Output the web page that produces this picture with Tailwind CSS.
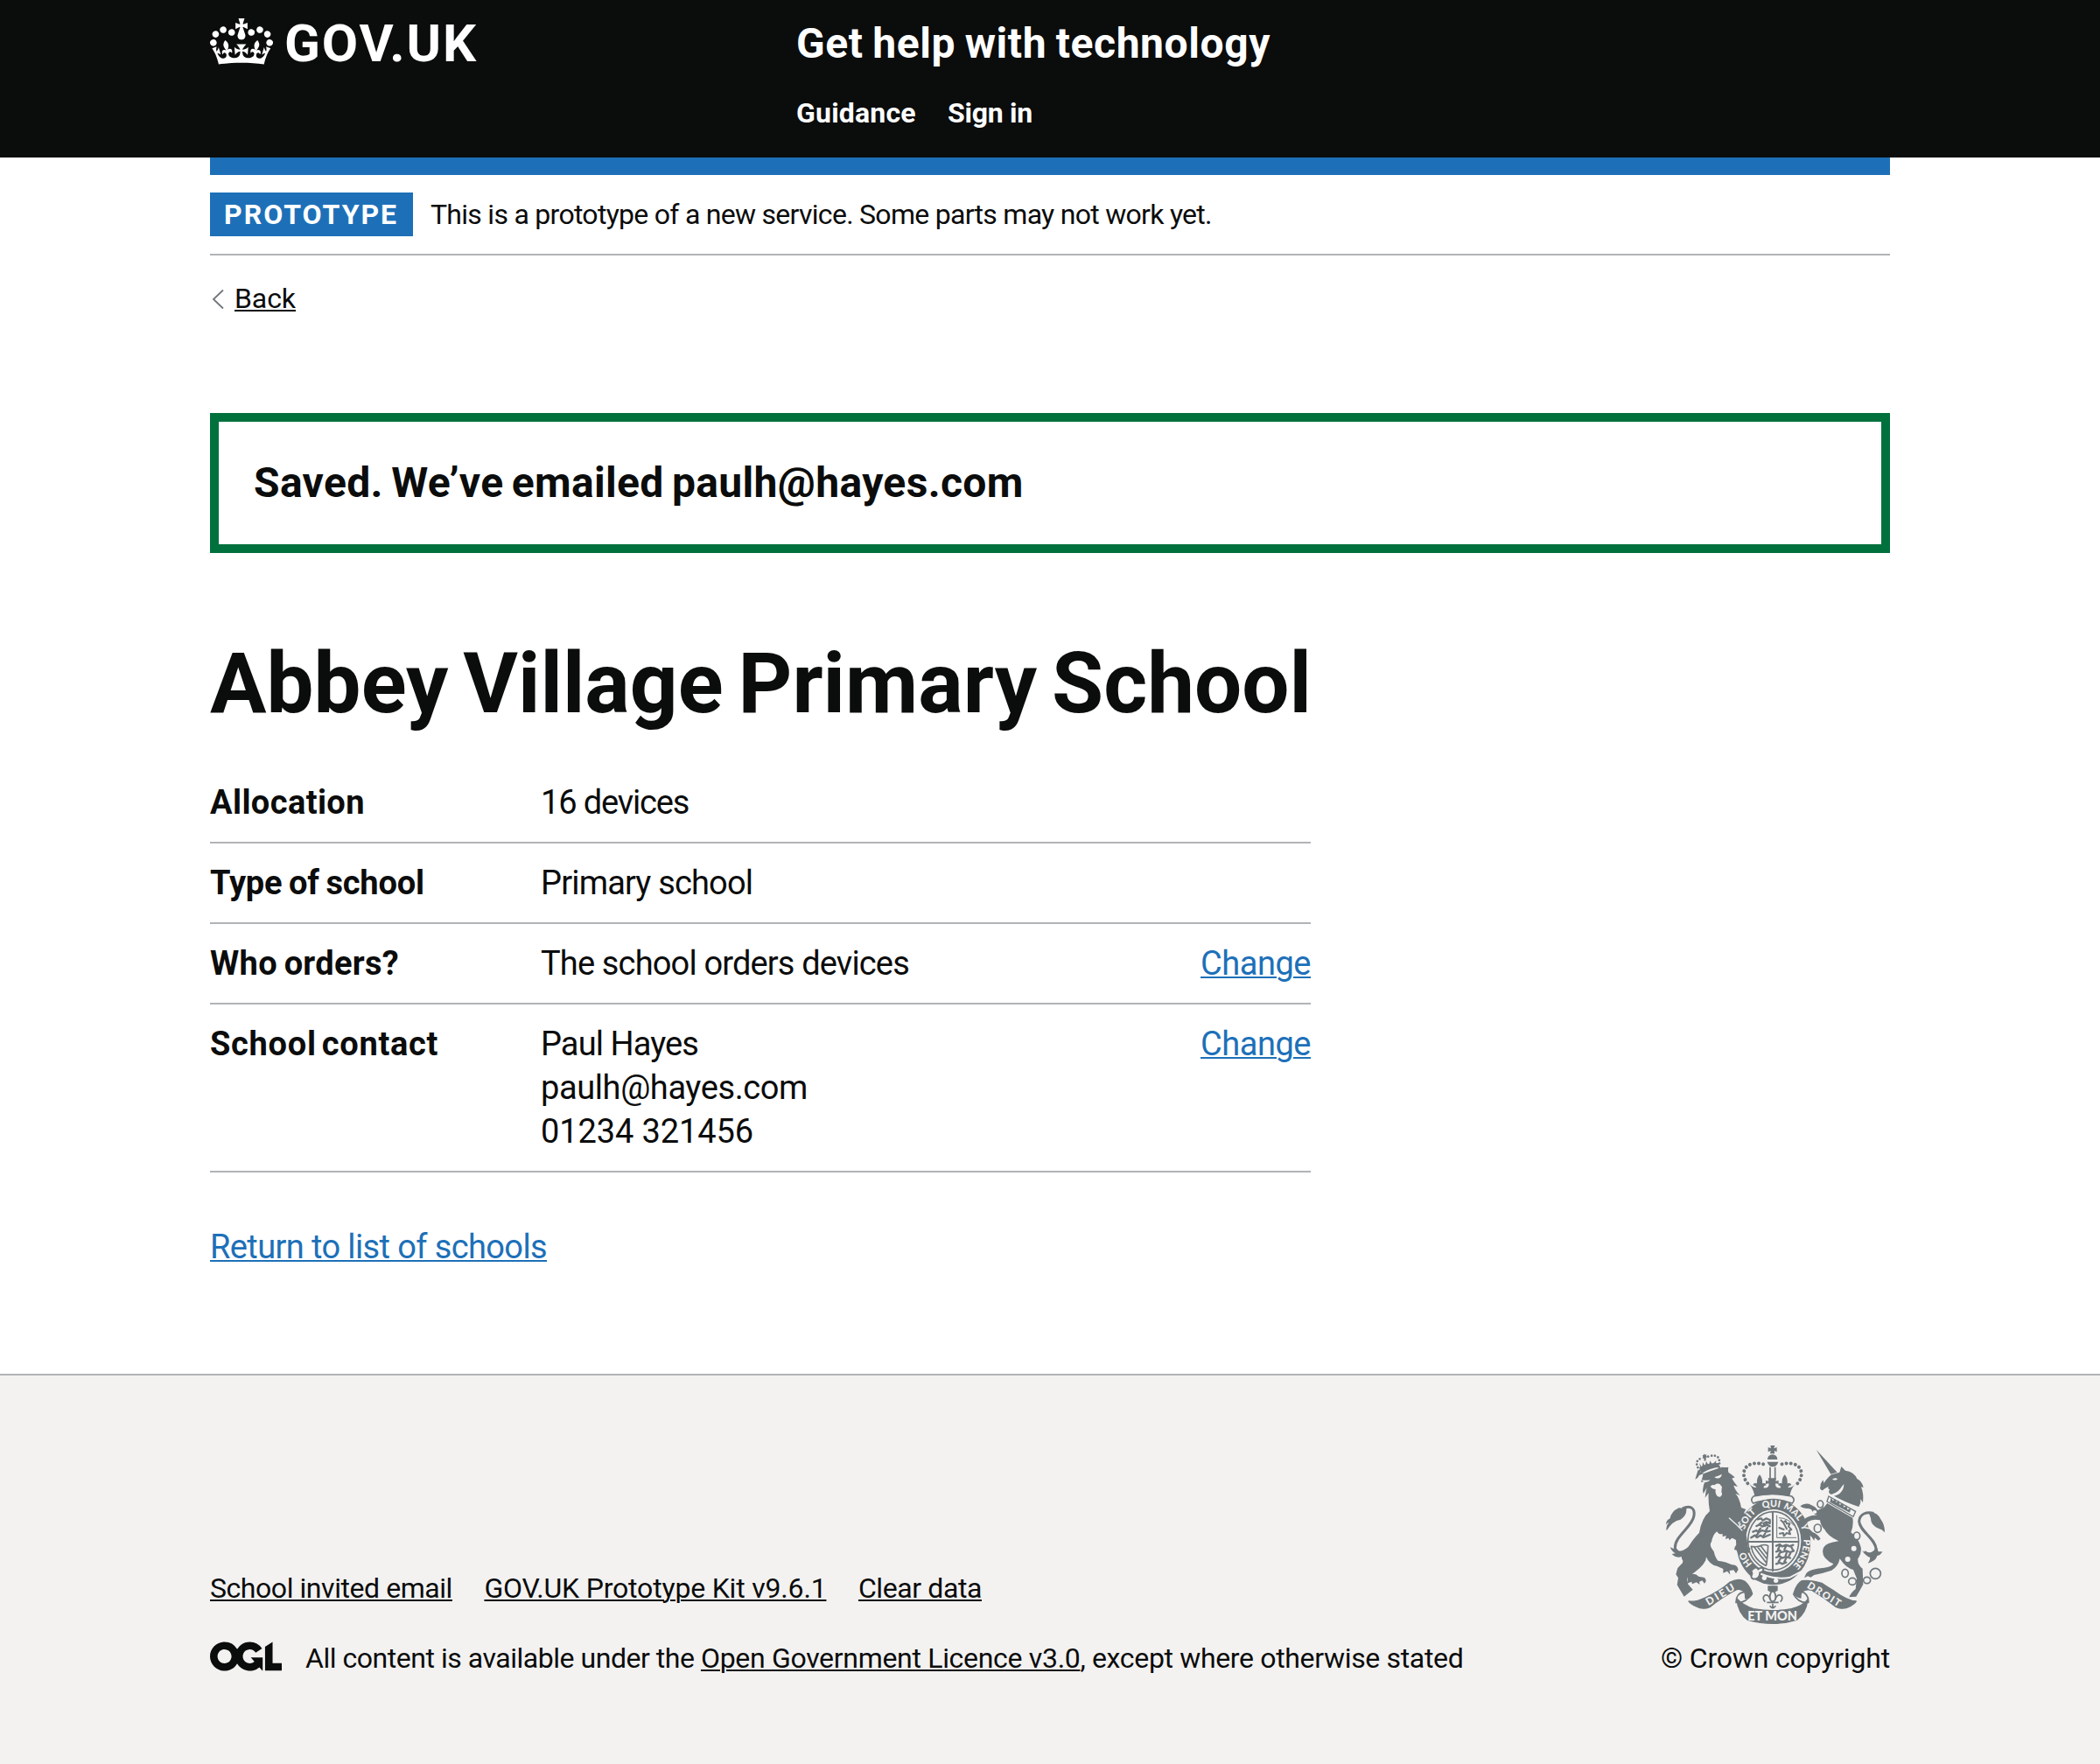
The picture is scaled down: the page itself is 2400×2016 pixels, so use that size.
<!DOCTYPE html>
<html lang="en">
<head>
<meta charset="utf-8">
<title>Abbey Village Primary School</title>
<script src="https://cdn.jsdelivr.net/npm/@tailwindcss/browser@4"></script>
</head>
<body class="flex min-h-screen flex-col bg-white font-['Roboto',sans-serif] text-[32px] leading-[40px] whitespace-nowrap text-[#0b0c0c]">

<header class="h-[180px] bg-[#0b0c0c] px-[240px] pt-5 font-bold text-white">
  <div class="flex">
    <a href="#" class="flex h-[60px] w-[670px] gap-[13px]">
      <svg class="mt-px h-[53px] w-[72px]" viewBox="0 0 132 97" fill="currentColor" aria-hidden="true"><path fill-rule="evenodd" d="M25 30.2c3.5 1.5 7.7-.2 9.1-3.7 1.5-3.6-.2-7.8-3.9-9.2-3.6-1.4-7.6.3-9.1 3.9-1.4 3.5.3 7.5 3.9 9zM9 39.5c3.6 1.5 7.8-.2 9.2-3.7 1.5-3.6-.2-7.8-3.9-9.1-3.6-1.5-7.6.2-9.1 3.8-1.4 3.5.3 7.5 3.8 9zM4.4 57.2c3.5 1.5 7.7-.2 9.1-3.8 1.5-3.6-.2-7.7-3.9-9.1-3.5-1.5-7.6.3-9.1 3.8-1.4 3.5.3 7.6 3.9 9.1zm38.3-21.4c3.5 1.5 7.7-.2 9.1-3.8 1.5-3.6-.2-7.7-3.9-9.1-3.6-1.5-7.6.3-9.1 3.8-1.3 3.6.4 7.7 3.9 9.1zm64.4-5.6c-3.6 1.5-7.8-.2-9.1-3.7-1.5-3.6.2-7.8 3.8-9.2 3.6-1.4 7.7.3 9.2 3.9 1.3 3.5-.4 7.5-3.9 9zm15.9 9.3c-3.6 1.5-7.7-.2-9.1-3.7-1.5-3.6.2-7.8 3.7-9.1 3.6-1.5 7.7.2 9.2 3.8 1.5 3.5-.3 7.5-3.8 9zm4.7 17.7c-3.6 1.5-7.8-.2-9.2-3.8-1.5-3.6.2-7.7 3.9-9.1 3.6-1.5 7.7.3 9.2 3.8 1.3 3.5-.4 7.6-3.9 9.1zM89.3 35.8c-3.6 1.5-7.8-.2-9.2-3.8-1.4-3.6.2-7.7 3.9-9.1 3.6-1.5 7.7.3 9.2 3.8 1.4 3.6-.3 7.7-3.9 9.1zM69.7 17.7l8.9 4.7V9.3l-8.9 2.8c-.2-.3-.5-.6-.9-.9L72.4 0H59.6l3.5 11.2c-.3.3-.6.5-.9.9l-8.8-2.8v13.1l8.8-4.7c.3.3.6.7.9.9l-5 15.4v.1c-.2.8-.4 1.6-.4 2.4 0 4.1 3.1 7.5 7 8.1h.2c.3 0 .7.1 1 .1.4 0 .7 0 1-.1h.2c4-.6 7.1-4.1 7.1-8.1 0-.8-.1-1.7-.4-2.4V34l-5.1-15.4c.4-.2.7-.6 1-.9zM66 92.8c16.9 0 32.8 1.1 47.1 3.2 4-16.9 8.9-26.7 14-33.5l-9.6-3.4c1 4.9 1.1 7.2 0 10.2-1.5-1.4-3-4.3-4.2-8.7L108.6 76c2.8-2 5-3.2 7.5-3.3-4.4 9.4-10 11.9-13.6 11.2-4.3-.8-6.3-4.6-5.6-7.9 1-4.7 5.7-5.9 8-.5 4.3-8.7-3-11.4-7.6-8.8 7.1-7.2 7.9-13.5 2.1-21.1-8 6.1-8.1 12.3-4.5 20.8-4.7-5.4-12.1-2.5-9.5 6.2 3.4-5.2 7.9-2 7.2 3.1-.6 4.3-6.4 7.8-13.5 7.2-10.3-.9-10.9-8-11.2-13.8 2.5-.5 7.1 1.8 11 7.3L80.2 60c-4.1 4.4-8 5.3-12.3 5.4 1.4-4.4 8-11.6 8-11.6H55.5s6.4 7.2 7.9 11.6c-4.2-.1-8-1-12.3-5.4l1.4 16.4c3.9-5.5 8.5-7.7 10.9-7.3-.3 5.8-.9 12.8-11.1 13.8-7.2.6-12.9-2.9-13.5-7.2-.7-5 3.8-8.3 7.1-3.1 2.7-8.7-4.6-11.6-9.4-6.2 3.7-8.5 3.6-14.7-4.6-20.8-5.8 7.6-5 13.9 2.2 21.1-4.7-2.6-11.9.1-7.7 8.8 2.3-5.5 7.1-4.2 8.1.5.7 3.3-1.3 7.1-5.7 7.9-3.5.7-9-1.8-13.5-11.2 2.5.1 4.7 1.3 7.5 3.3l-4.7-15.4c-1.2 4.4-2.7 7.2-4.3 8.7-1.1-3-.9-5.3 0-10.2l-9.5 3.4c5 6.9 9.9 16.7 14 33.5 14.8-2.1 30.8-3.2 47.7-3.2z"/></svg>
      <span class="text-[60px] leading-[60px] tracking-[1.9px]">GOV.UK</span>
    </a>
    <div>
      <a href="#" class="block text-[48px] leading-[60px] tracking-[0.6px] [word-spacing:-2px]">Get help with technology</a>
      <nav class="mt-[29px] flex">
        <a href="#" class="w-[173px] tracking-[0.2px]">Guidance</a>
        <a href="#" class="tracking-[-0.25px]">Sign in</a>
      </nav>
    </div>
  </div>
</header>

<div class="px-[240px]">
  <div class="h-5 bg-[#1d70b8]"></div>
  <div class="flex items-center gap-5 border-b-2 border-[#b1b4b6] py-5">
    <strong class="flex h-[50px] w-[232px] items-center bg-[#1d70b8] pl-4 font-bold tracking-[2px] text-white">PROTOTYPE</strong>
    <span class="tracking-[-0.72px]">This is a prototype of a new service. Some parts may not work yet.</span>
  </div>
  <a href="#" class="mt-[29px] flex w-fit">
    <svg class="mt-[9px] mr-[11px] ml-[2px] h-[24px] w-[15px]" viewBox="0 0 15 24" fill="none" stroke="#6f777b" stroke-width="1.8" aria-hidden="true"><path d="M13 1.5 2 12l11 10.5"/></svg>
    <span class="tracking-[-0.08px] underline decoration-2 underline-offset-[2px]">Back</span>
  </a>

  <main class="pt-[111px] pb-[120px] text-[38px] leading-[50px]">
    <div class="border-[10px] border-[#00703c] p-10 text-[48px] leading-[60px] font-bold tracking-[0.35px] [word-spacing:-3px]">Saved. We’ve emailed paulh@hayes.com</div>
    <h1 class="mt-[99px] text-[96px] leading-[100px] font-bold tracking-[0.05px] [word-spacing:-7px]">Abbey Village Primary School</h1>

    <dl class="mt-[41px] w-[1258px]">
      <div class="flex border-b-2 border-[#b1b4b6] py-5">
        <dt class="w-[378px] font-bold tracking-[0.4px]">Allocation</dt>
        <dd class="flex-1 tracking-[-1.15px]">16 devices</dd>
      </div>
      <div class="flex border-b-2 border-[#b1b4b6] py-5">
        <dt class="w-[378px] font-bold tracking-[-0.2px] [word-spacing:-1.5px]">Type of school</dt>
        <dd class="flex-1 tracking-[-0.82px]">Primary school</dd>
      </div>
      <div class="flex border-b-2 border-[#b1b4b6] py-5">
        <dt class="w-[378px] font-bold tracking-[0.3px] [word-spacing:-2px]">Who orders?</dt>
        <dd class="flex-1 tracking-[-0.84px]">The school orders devices</dd>
        <dd><a href="#" class="tracking-[-0.47px] text-[#1d70b8] underline decoration-2 underline-offset-[2px]">Change</a></dd>
      </div>
      <div class="flex border-b-2 border-[#b1b4b6] py-5">
        <dt class="w-[378px] font-bold tracking-[0.7px] [word-spacing:-4px]">School contact</dt>
        <dd class="flex-1"><span class="tracking-[-0.9px]">Paul Hayes</span><br><span class="tracking-[-0.4px]">paulh@hayes.com</span><br><span class="tracking-[-0.11px]">01234 321456</span></dd>
        <dd><a href="#" class="tracking-[-0.47px] text-[#1d70b8] underline decoration-2 underline-offset-[2px]">Change</a></dd>
      </div>
    </dl>

    <p class="mt-[60px]"><a href="#" class="tracking-[-0.61px] text-[#1d70b8] underline decoration-2 underline-offset-[2px]">Return to list of schools</a></p>
  </main>
</div>

<footer class="flex flex-1 justify-between border-t-2 border-[#b1b4b6] bg-[#f3f2f1] px-[240px] pt-20">
  <div class="flex flex-col pt-[143px]">
    <div class="flex gap-[36.5px]">
      <a href="#" class="tracking-[-0.44px] underline decoration-2 underline-offset-[2px]">School invited email</a>
      <a href="#" class="tracking-[-0.185px] underline decoration-2 underline-offset-[2px]">GOV.UK Prototype Kit v9.6.1</a>
      <a href="#" class="tracking-[-0.41px] underline decoration-2 underline-offset-[2px]">Clear data</a>
    </div>
    <div class="mt-10 flex">
      <svg class="mt-px mr-[27px] h-[34px] w-[82px]" viewBox="0 0 483.2 195.7" fill="currentColor" role="img" aria-label="Open Government Licence"><path d="M421.5 142.8V.1l-50.7 32.3v161.1h112.4v-50.7zm-122.3-9.6A47.12 47.12 0 0 1 221 97.8c0-26 21.1-47.1 47.1-47.1 16.7 0 31.4 8.7 39.7 21.8l42.7-27.2A97.63 97.63 0 0 0 268.1 0c-36.5 0-68.3 20.1-85.1 49.7A98 98 0 0 0 97.8 0C43.9 0 0 43.9 0 97.8s43.9 97.8 97.8 97.8c36.5 0 68.3-20.1 85.1-49.7a97.76 97.76 0 0 0 149.6 25.4l19.4 22.2h3v-87.8h-80l24.3 27.5zM97.8 145c-26 0-47.1-21.1-47.1-47.1s21.1-47.1 47.1-47.1 47.1 21.1 47.1 47.1S123.8 145 97.8 145"/></svg>
      <span class="tracking-[-0.47px] whitespace-pre">All content is available under the <a href="#" class="tracking-[-0.312px] underline decoration-2 underline-offset-[2px]">Open Government Licence v3.0</a><span class="tracking-[-0.34px]">, except where otherwise stated</span></span>
    </div>
  </div>

  <a href="#" class="flex flex-col items-end">
    <!-- Royal coat of arms -->
    <svg class="mr-[6px] h-[204px] w-[250px]" viewBox="72 36 750 612" fill="#6f777b" stroke="none" aria-hidden="true">
      <!-- central crown -->
      <path d="M430 36h15l-3 10 10-4v16l-9-4 2 10h-16l2-10-9 4V42l10 4zM420 84q0-15 17-17 17 2 17 17zM419 92h38q-4 16-19 17-15-1-19-17z"/>
      <path d="M429 110v40M446 110v40" fill="none" stroke="#6f777b" stroke-width="5"/>
      <g fill="none" stroke="#6f777b" stroke-width="12" stroke-linecap="round">
        <path d="M352 166c-22-26-16-58 12-66 20-6 38-2 54 4" stroke-dasharray=".1 15.2"/>
        <path d="M523 166c22-26 16-58-12-66-20-6-38-2-54 4" stroke-dasharray=".1 15.2"/>
      </g>
      <path d="M358 168q14 14 24 12-4-8-12-8 2-10 14-6-2-18 9-30 11 12 9 30 12-4 14 6-8 0-10 8 8 4 16-2 4-6 2-12l-10 2v-12l10 2-2-10h28l-2 10 10-2v12l-10-2q-2 6 2 12 8 6 16 2-2-8-10-8 2-10 14-6-2-18 9-30 11 12 9 30 12-4 14 6-8 0-12 8 14 2 24-12-14 18-18 42-60-12-120 0-4-24-18-42z"/>
      <path d="M372 210q65-16 131 0 14 12 2 24-68-22-134 0-12-12 1-24z" fill="none" stroke="#6f777b" stroke-width="5"/>

      <!-- garter and shield -->
      <ellipse cx="440" cy="366" rx="128" ry="148"/>
      <ellipse cx="440" cy="363" rx="95" ry="108" fill="#f3f2f1"/>
      <ellipse cx="440" cy="363" rx="87" ry="100" fill="none" stroke="#6f777b" stroke-width="5"/>
      <path d="M438 262v206M352 366h176" stroke="#6f777b" stroke-width="6"/>
      <g fill="none" stroke="#6f777b" stroke-width="7" stroke-linejoin="round" stroke-linecap="round">
        <path d="M386 289l12-3 6 7 12-7 12 5v12l-12-5-10 5 4 8M382 312l12-5 8 7 14-7 12 6M370 332l12-5 6 7 14-7 14 5 12-3M364 352l12-8 8 7 12-7 10 7 22-9M400 300l-10 8M418 302l-6 10M396 320l-6 8M420 318l-6 10M388 338l-8 8M412 338l-6 8"/>
        <path d="M450 380l12-5 8 7 14-5 14 5 10-5M450 400l12-5 6 7 16-5 14 5 12-5M450 420l12-5 8 7 14-5 14 5M450 442l12-5 8 5 14-5M462 380l-6 12M484 380l-6 12M500 380l6 12M464 402l-6 10M486 402l-4 12M500 402l-6 12M464 424l-6 10M484 422l-6 12"/>
        <path d="M466 292l8 8 8-6 4 10 10 0-4 10 10 10-8 4 4 12-12-4-10 10-2-10-12 2M476 304l10 18M460 318l16 6" stroke-width="6"/>
        <path d="M452 276v76h66M460 284q30 0 50 26" stroke-width="3"/>
        <path d="M364 382q22 4 36-4 12-4 22 2-2 40-6 66M364 382q8 44 50 66M374 384l40 52M386 384l30 38M398 382l20 26" stroke-width="5"/>
      </g>
      <!-- lower strap, buckle and hanging fleur -->
      <path d="M366 462q70 38 132 26l50-26" fill="none" stroke="#f3f2f1" stroke-width="6"/>
      <circle cx="409" cy="490" r="8" fill="#f3f2f1"/><circle cx="449" cy="499" r="8" fill="#f3f2f1"/>
      <path d="M372 458q10-8 16 2 14-10 18 0 0 10-12 12 0 14-10 20-18 6-20-8 6-10 0-18z" fill="#f3f2f1" stroke="#6f777b" stroke-width="6"/>
      <path d="M421 517h34v16l-10 6h-14l-10-6z"/>
      <path d="M438 532q-16 16-6 36 6 4 12 0 10-20-6-36zM430 566q-6-22-20-16-10 10 2 22M446 566q6-22 20-16 10 10-2 22M418 574h40M438 578v16M428 586q10 14 20 0" fill="none" stroke="#6f777b" stroke-width="5"/>

      <!-- lion -->
      <path d="M186 112q24-16 66-16l4 14q-34 2-62 22z"/>
      <path d="M186 96l10 16 2-18 8 12 4-16 8 14 6-16 6 14 14-14-2 22-50 10z"/>
      <path d="M202 64l4 4 5-2-1 6 4 3-5 3v10l-6 1-1-9-6-1 3-4-2-5 4-1z"/>
      <path d="M188 122q-14-20-10-30 6-12 20-12M254 110q4-24-4-34-12-10-34-2" fill="none" stroke="#6f777b" stroke-width="8" stroke-linecap="round" stroke-dasharray=".1 11.5"/>
      <path d="M172 152q10-4 14-14 40-16 78-28 12 2 22 0-2 10 0 18 10 6 22 17l-10 4q8 14 20 28l-14-4q4 16 22 34l-16-6q14 14 20 48l16 6-6 10 4 16-14 12-12 8q12 18 22 26 10 14 12 56l10 6-6 16-10-4-4 10-8-12-14 6-6-10-8-2q2-12 8-18l6-4q-6-14-22-18l-8 8-4-8-10 4 2-12-12 4v-10q-12 4-20-8-14 12-18 36-10 10 8 32 4 20 14 32 30 4 48 14 18 0 22 16l-8 14-8-12-14 2 2 14-10-12-14 6 0-14-22-10q-24-2-38-34-4-34-12-58-14 38-36 54-22 16-22 36-4 26 20 30 16-4 26 8l20 4q10 10 0 20l-8-10-10 4 2 10-12-8-14 6-2-8-16 6q8-20-4-34-14-22-10-44-8-10-2-20-4-10 6-16l10-2q14-30 42-58 8-50 36-74-6-36-4-62l-12 16q2-22 6-34l-12 20q-6-22 8-46-8 8-16 6 6-18 8-30-12-2-18-12z"/>
      <path d="M186 350Q150 420 112 456L106 478 114 490 110 514 134 554 164 530 148 512Q142 492 148 486 196 456 208 430L218 370z"/>
      <path d="M194 152q10 6 30 2-6 8-16 8-10-2-14-10zM238 144q10-2 26-10-2 10-10 14-10 2-16-4z" fill="#f3f2f1"/>
      <path d="M224 176q6-8 14-4 8-8 18-4l8 10q-2 10-2 18 6 8-4 16-10 2-14-8-4-10-2-18-10 2-18-10z" fill="#f3f2f1"/>
      <path d="M288 284q26 22 46 44" fill="none" stroke="#f3f2f1" stroke-width="4"/>
      <path d="M128 252C152 240 172 248 168 276 164 314 102 346 103 386 106 412 136 404 158 380" fill="none" stroke="#6f777b" stroke-width="9"/>
      <path d="M142 252q2 24-20 38-28 4-48 38-4-16 8-28-8 2-10 8 0-16 14-22 4-24 30-36z"/>
      <path d="M86 384q10 8 22 6l10 10q18 4 28-10-2 20-22 28-20 4-32-10l12-2q-12-6-18-22z"/>

      <!-- unicorn -->
      <path d="M587 50l72 78-22 6z"/>
      <path d="M607 176q14-26 32-40l28-8 6-20 14 14q30 4 40 28 18 10 22 30l-8-2q10 24 6 54l-8-12q2 14-6 26-50-16-94-42-14-4-6-18-8-2-4-10l-22 14q-10-6-4-14z"/>
      <path d="M602 168l8-14 6 18-6 18-9-6z"/>
      <path d="M642 152q8-8 18-2-4 8-18 2zM630 206q26-4 40-22 6-10 12-16 0 20-14 32-14 10-32 10z" fill="#f3f2f1"/>
      <path d="M625 234L712 284Q716 312 706 334 730 350 740 384 744 404 730 424 728 444 746 458L748 512 736 534 724 554 700 556Q706 540 722 528L726 492 714 462Q690 456 672 430L668 424Q662 452 640 464 610 474 580 480L568 488 558 484 546 490 552 476Q560 460 615 455 640 452 646 442 630 436 620 424 604 408 612 386 620 370 664 364 624 344 616 324 602 312 600 292 574 286 558 298 550 306 558 318L576 334Q590 338 602 356L594 362 582 352 580 362 570 348Q552 338 546 318 536 306 544 292 560 272 598 276 606 256 625 234z"/>
      <path d="M604 276Q582 280 574 262 570 252 558 252 542 254 532 244 550 230 570 240 586 246 592 258 602 256 614 244z"/>
      <path d="M630 210l92 52-8 18-90-52z" fill="#f3f2f1" stroke="#6f777b" stroke-width="4"/>
      <path d="M634 230l4-16 6 12 8-6 4 12 8-6 4 14 10-6 4 14 10-6 2 14 12-4-4 14z"/>
      <g fill="#f3f2f1" stroke="#6f777b" stroke-width="5">
        <ellipse cx="601" cy="237" rx="10" ry="12"/><ellipse cx="592" cy="320" rx="12" ry="14"/><ellipse cx="726" cy="346" rx="11" ry="13"/>
        <ellipse cx="686" cy="474" rx="11" ry="14"/><ellipse cx="711" cy="502" rx="13" ry="12"/><ellipse cx="761" cy="498" rx="12" ry="11"/><circle cx="790" cy="475" r="18"/>
      </g>
      <g fill="#f3f2f1"><ellipse cx="582" cy="264" rx="7" ry="6"/><circle cx="716" cy="389" r="9"/><circle cx="695" cy="426" r="9"/></g>
      <path d="M784 268C760 262 736 270 734 296 736 330 792 356 792 392 790 412 770 414 752 400" fill="none" stroke="#6f777b" stroke-width="9"/>
      <path d="M764 264q34-2 46 28 12 16 12 42-10-12-22-14-26-10-26-34-2-12-10-22zM744 396q12 10 24 8 20-4 26-24l6 20 14 0q-6 12-18 14-4 18-32 26 8-10 8-20-14-4-28-24z"/>

      <!-- ribbon -->
      <g stroke="#6f777b" stroke-width="4" stroke-linejoin="round">
        <path d="M150 570q22 4 56-12 50-22 86-54 30-14 50-2 18 16 26 42-8 16-24 16 2-24-12-28-10-4-18-2-50 26-92 60-24 10-46-2-18-8-26-18z"/>
        <path d="M724 570q-30-2-74-34-24-14-44-28-40-12-68-8-18 10-28 42 8 14 24 16-2-20 10-24 14-6 28-2 44 26 84 58 24 10 46-2 16-8 22-18z"/>
        <path d="M314 560q22 24 58 36 66 12 130 0 38-8 56-32-6 48-38 70-40 12-82 12-44 0-86-12-32-22-38-74z"/>
      </g>
      <path d="M366 544q-20 34-54 30 0-32 28-36M508 544q18 34 52 30 2-30-26-38" fill="none" stroke="#6f777b" stroke-width="5"/>

      <!-- mottoes -->
      <path id="garter" pathLength="100" d="M440 474A102 112 0 0 1 440 246A102 112 0 0 1 440 474" fill="none"/>
      <g fill="#f3f2f1" font-family="Lato, sans-serif" font-weight="900" font-size="32" text-anchor="middle">
        <text><textPath href="#garter" startOffset="15.5%">HO</textPath></text>
        <text><textPath href="#garter" startOffset="35.5%">SOIT</textPath></text>
        <text><textPath href="#garter" startOffset="49%">QUI</textPath></text>
        <text><textPath href="#garter" startOffset="60%">MAL</textPath></text>
        <text><textPath href="#garter" startOffset="69%">Y</textPath></text>
        <text><textPath href="#garter" startOffset="82%">PENSE</textPath></text>
        <text transform="translate(264 558) rotate(-31)" font-size="36" textLength="108">DIEU</text>
        <text x="437" y="636" font-size="45" textLength="170" lengthAdjust="spacingAndGlyphs">ET MON</text>
        <text transform="translate(608 556) rotate(32)" font-size="34" textLength="128">DROIT</text>
      </g>
    </svg>
    <span class="mt-[19px] tracking-[-0.175px]">© Crown copyright</span>
  </a>
</footer>

</body>
</html>
